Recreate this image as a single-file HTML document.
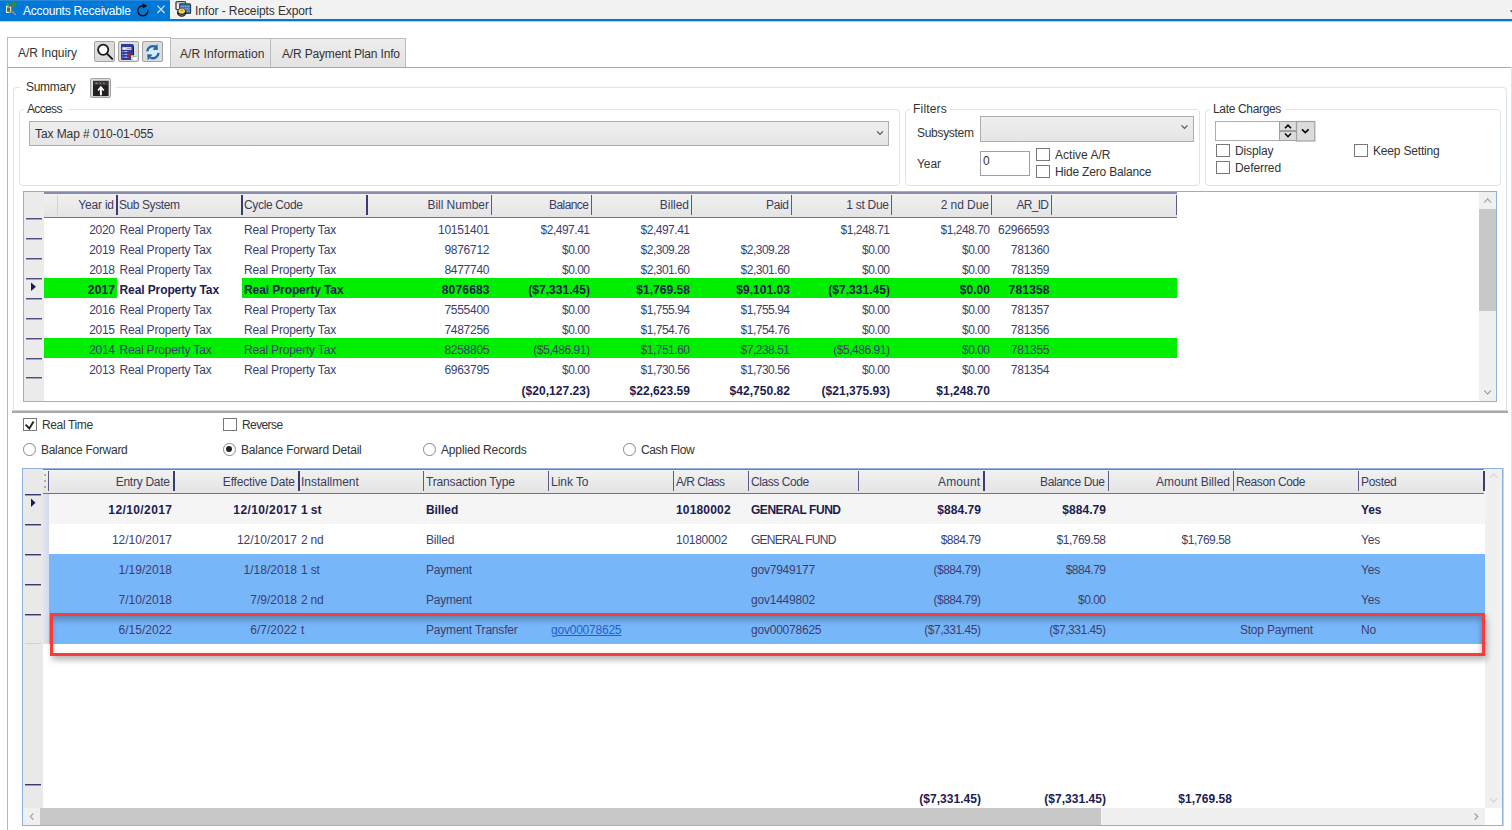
<!DOCTYPE html>
<html><head><meta charset="utf-8">
<style>
*{box-sizing:border-box;margin:0;padding:0}
html,body{width:1512px;height:830px;overflow:hidden;background:#fff}
body{position:relative;font-family:"Liberation Sans",sans-serif;font-size:11.5px;color:#333}
.a{position:absolute}
.t{position:absolute;white-space:nowrap;line-height:14px}
svg{position:absolute;overflow:visible}
.gb{position:absolute;border:1px solid #dce4eb;border-radius:4px}
.cb{position:absolute;width:14px;height:13px;border:1px solid #787878;background:#fff}
.rd{position:absolute;width:12.5px;height:12.5px;border:1px solid #8a8a8a;border-radius:50%;background:#fff}
.btn{position:absolute;border:1px solid #a3a3a3;border-radius:2px;background:#dcdcdc}
</style></head>
<body>

<div class="a" style="left:0px;top:0px;width:1512px;height:19px;background:#f2f2f2"></div>
<div class="a" style="left:0px;top:21px;width:1512px;height:1px;background:#b4d3f1"></div>
<div class="a" style="left:0px;top:19px;width:1512px;height:2px;background:#0078d7"></div>
<div class="a" style="left:0px;top:0px;width:170px;height:21px;background:#0078d7"></div>
<div class="a" style="left:0px;top:0px;width:170px;height:1px;background:#2a8ade"></div>
<div class="t" style="top:3.84px;font-size:12.0px;letter-spacing:-0.235px;color:#fff;left:23px;">Accounts Receivable</div>
<div class="t" style="top:3.84px;font-size:12.0px;letter-spacing:-0.104px;color:#333;left:195px;">Infor - Receipts Export</div>
<div class="a" style="left:7px;top:37px;width:164px;height:31px;border:1px solid #bcbcc0;border-bottom:none;background:#fff"></div>
<div class="a" style="left:170px;top:38px;width:101px;height:30px;border:1px solid #bcbcbc;border-bottom:none;background:linear-gradient(#ededed,#e3e3e3)"></div>
<div class="a" style="left:270px;top:38px;width:136px;height:30px;border:1px solid #bcbcbc;border-bottom:none;background:linear-gradient(#ededed,#e3e3e3)"></div>
<div class="t" style="top:45.84px;font-size:12.0px;letter-spacing:-0.032px;left:18px;">A/R Inquiry</div>
<div class="t" style="top:46.84px;font-size:12.0px;letter-spacing:0.069px;left:180px;">A/R Information</div>
<div class="t" style="top:46.84px;font-size:12.0px;letter-spacing:-0.171px;left:282px;">A/R Payment Plan Info</div>
<div class="btn" style="left:94px;top:41px;width:21px;height:21px"></div>
<div class="btn" style="left:118px;top:41px;width:21px;height:21px"></div>
<div class="btn" style="left:142px;top:41px;width:21px;height:21px"></div>
<div class="a" style="left:7px;top:67px;width:1505px;height:1px;background:#a8a8ac"></div>
<div class="a" style="left:7px;top:67px;width:1px;height:763px;background:#b4b6bc"></div>
<div class="a" style="left:1511px;top:67px;width:1px;height:763px;background:#e2e2e2"></div>
<div class="gb" style="left:13px;top:87px;width:1494px;height:323px;border-bottom:none;border-radius:4px 4px 0 0"></div>
<div class="a" style="left:20px;top:80px;width:96px;height:16px;background:#fff"></div>
<div class="t" style="top:79.84px;font-size:12.0px;letter-spacing:-0.277px;left:26px;">Summary</div>
<div class="btn" style="left:90px;top:78px;width:21px;height:20px"></div>
<div class="gb" style="left:19px;top:109px;width:881px;height:77px"></div>
<div class="a" style="left:24px;top:102px;width:44px;height:14px;background:#fff"></div>
<div class="t" style="top:102.34px;font-size:12.0px;letter-spacing:-0.646px;left:27px;">Access</div>
<div class="a" style="left:29px;top:121px;width:860px;height:25px;border:1px solid #adadad;background:linear-gradient(#efefef,#e5e5e5)"></div>
<div class="t" style="top:126.84px;font-size:12.0px;letter-spacing:-0.084px;left:35px;">Tax Map # 010-01-055</div>
<div class="gb" style="left:905px;top:109px;width:295px;height:77px"></div>
<div class="a" style="left:910px;top:102px;width:40px;height:14px;background:#fff"></div>
<div class="t" style="top:102.34px;font-size:12.0px;letter-spacing:0.190px;left:913px;">Filters</div>
<div class="t" style="top:125.84px;font-size:12.0px;letter-spacing:-0.306px;left:917px;">Subsystem</div>
<div class="a" style="left:980px;top:116px;width:214px;height:26px;border:1px solid #adadad;background:linear-gradient(#efefef,#e5e5e5)"></div>
<div class="t" style="top:156.84px;font-size:12.0px;letter-spacing:-0.062px;left:917px;">Year</div>
<div class="a" style="left:980px;top:151px;width:50px;height:25px;border:1px solid #a0a0a0;background:#fff"></div>
<div class="t" style="top:153.84px;font-size:12px;left:983px;">0</div>
<div class="cb" style="left:1036px;top:148px"></div>
<div class="t" style="top:148.04px;font-size:12.0px;letter-spacing:0.015px;left:1055px;">Active A/R</div>
<div class="cb" style="left:1036px;top:165px"></div>
<div class="t" style="top:165.04px;font-size:12.0px;letter-spacing:-0.188px;left:1055px;">Hide Zero Balance</div>
<div class="gb" style="left:1205px;top:109px;width:296px;height:77px"></div>
<div class="a" style="left:1210px;top:102px;width:76px;height:14px;background:#fff"></div>
<div class="t" style="top:102.34px;font-size:12.0px;letter-spacing:-0.337px;left:1213px;">Late Charges</div>
<div class="a" style="left:1215px;top:121px;width:82px;height:20px;border:1px solid #adadad;background:#fff"></div>
<div class="cb" style="left:1216px;top:144px"></div>
<div class="t" style="top:144.04px;font-size:12.0px;letter-spacing:-0.121px;left:1235px;">Display</div>
<div class="cb" style="left:1216px;top:161px"></div>
<div class="t" style="top:161.04px;font-size:12.0px;letter-spacing:-0.086px;left:1235px;">Deferred</div>
<div class="cb" style="left:1354px;top:144px"></div>
<div class="t" style="top:144.04px;font-size:12.0px;letter-spacing:-0.177px;left:1373px;">Keep Setting</div>
<div class="a" style="left:23px;top:191px;width:1474px;height:211px;border:1px solid #8fb1db;background:#fff"></div>
<div class="a" style="left:24px;top:192px;width:20px;height:209px;background:#ececec"></div>
<div class="a" style="left:44px;top:192px;width:1133px;height:26px;background:linear-gradient(#f1f1f1,#e4e4e4);border-top:2px solid #8a8cab;border-bottom:1px solid #6f6f92"></div>
<div class="a" style="left:57px;top:195px;width:1px;height:20px;background:#d0d0d8"></div>
<div class="a" style="left:116px;top:195px;width:2px;height:20px;background:#3a3b70"></div>
<div class="a" style="left:241px;top:195px;width:2px;height:20px;background:#3a3b70"></div>
<div class="a" style="left:366px;top:195px;width:2px;height:20px;background:#3a3b70"></div>
<div class="a" style="left:491px;top:195px;width:1px;height:20px;background:#5b5b88"></div>
<div class="a" style="left:591px;top:195px;width:1px;height:20px;background:#5b5b88"></div>
<div class="a" style="left:691px;top:195px;width:1px;height:20px;background:#5b5b88"></div>
<div class="a" style="left:791px;top:195px;width:1px;height:20px;background:#5b5b88"></div>
<div class="a" style="left:891px;top:195px;width:1px;height:20px;background:#5b5b88"></div>
<div class="a" style="left:991px;top:195px;width:1px;height:20px;background:#5b5b88"></div>
<div class="a" style="left:1051px;top:195px;width:1px;height:20px;background:#5b5b88"></div>
<div class="a" style="left:1176px;top:195px;width:1px;height:20px;background:#5b5b88"></div>
<div class="t" style="top:197.84px;font-size:12.0px;letter-spacing:-0.203px;color:#3c3c5c;left:-186.20px;width:300px;text-align:right;">Year id</div>
<div class="t" style="top:197.84px;font-size:12.0px;letter-spacing:-0.419px;color:#3c3c5c;left:119px;">Sub System</div>
<div class="t" style="top:197.84px;font-size:12.0px;letter-spacing:-0.343px;color:#3c3c5c;left:244px;">Cycle Code</div>
<div class="t" style="top:197.84px;font-size:12.0px;letter-spacing:-0.047px;color:#3c3c5c;left:188.95px;width:300px;text-align:right;">Bill Number</div>
<div class="t" style="top:197.84px;font-size:12.0px;letter-spacing:-0.567px;color:#3c3c5c;left:288.43px;width:300px;text-align:right;">Balance</div>
<div class="t" style="top:197.84px;font-size:12.0px;letter-spacing:-0.042px;color:#3c3c5c;left:388.96px;width:300px;text-align:right;">Billed</div>
<div class="t" style="top:197.84px;font-size:12.0px;letter-spacing:-0.355px;color:#3c3c5c;left:488.65px;width:300px;text-align:right;">Paid</div>
<div class="t" style="top:197.84px;font-size:12.0px;letter-spacing:-0.286px;color:#3c3c5c;left:588.71px;width:300px;text-align:right;">1 st Due</div>
<div class="t" style="top:197.84px;font-size:12.0px;letter-spacing:-0.063px;color:#3c3c5c;left:688.94px;width:300px;text-align:right;">2 nd Due</div>
<div class="t" style="top:197.84px;font-size:12.0px;letter-spacing:-0.729px;color:#3c3c5c;left:748.27px;width:300px;text-align:right;">AR_ID</div>
<div class="t" style="top:222.84px;font-size:12.0px;letter-spacing:-0.278px;color:#3c3e6e;left:-185.28px;width:300px;text-align:right;">2020</div>
<div class="t" style="top:222.84px;font-size:12.0px;letter-spacing:-0.187px;color:#3c3e6e;left:119.5px;">Real Property Tax</div>
<div class="t" style="top:222.84px;font-size:12.0px;letter-spacing:-0.187px;color:#3c3e6e;left:244px;">Real Property Tax</div>
<div class="t" style="top:222.84px;font-size:12.0px;letter-spacing:-0.278px;color:#3c3e6e;left:189.22px;width:300px;text-align:right;">10151401</div>
<div class="t" style="top:222.84px;font-size:12.0px;letter-spacing:-0.494px;color:#3c3e6e;left:289.51px;width:300px;text-align:right;">$2,497.41</div>
<div class="t" style="top:222.84px;font-size:12.0px;letter-spacing:-0.494px;color:#3c3e6e;left:389.51px;width:300px;text-align:right;">$2,497.41</div>
<div class="t" style="top:222.84px;font-size:12.0px;letter-spacing:-0.494px;color:#3c3e6e;left:589.51px;width:300px;text-align:right;">$1,248.71</div>
<div class="t" style="top:222.84px;font-size:12.0px;letter-spacing:-0.494px;color:#3c3e6e;left:689.51px;width:300px;text-align:right;">$1,248.70</div>
<div class="t" style="top:222.84px;font-size:12.0px;letter-spacing:-0.278px;color:#3c3e6e;left:749.22px;width:300px;text-align:right;">62966593</div>
<div class="t" style="top:242.84px;font-size:12.0px;letter-spacing:-0.278px;color:#3c3e6e;left:-185.28px;width:300px;text-align:right;">2019</div>
<div class="t" style="top:242.84px;font-size:12.0px;letter-spacing:-0.187px;color:#3c3e6e;left:119.5px;">Real Property Tax</div>
<div class="t" style="top:242.84px;font-size:12.0px;letter-spacing:-0.187px;color:#3c3e6e;left:244px;">Real Property Tax</div>
<div class="t" style="top:242.84px;font-size:12.0px;letter-spacing:-0.278px;color:#3c3e6e;left:189.22px;width:300px;text-align:right;">9876712</div>
<div class="t" style="top:242.84px;font-size:12.0px;letter-spacing:-0.501px;color:#3c3e6e;left:289.50px;width:300px;text-align:right;">$0.00</div>
<div class="t" style="top:242.84px;font-size:12.0px;letter-spacing:-0.494px;color:#3c3e6e;left:389.51px;width:300px;text-align:right;">$2,309.28</div>
<div class="t" style="top:242.84px;font-size:12.0px;letter-spacing:-0.494px;color:#3c3e6e;left:489.51px;width:300px;text-align:right;">$2,309.28</div>
<div class="t" style="top:242.84px;font-size:12.0px;letter-spacing:-0.501px;color:#3c3e6e;left:589.50px;width:300px;text-align:right;">$0.00</div>
<div class="t" style="top:242.84px;font-size:12.0px;letter-spacing:-0.501px;color:#3c3e6e;left:689.50px;width:300px;text-align:right;">$0.00</div>
<div class="t" style="top:242.84px;font-size:12.0px;letter-spacing:-0.278px;color:#3c3e6e;left:749.22px;width:300px;text-align:right;">781360</div>
<div class="t" style="top:262.84px;font-size:12.0px;letter-spacing:-0.278px;color:#3c3e6e;left:-185.28px;width:300px;text-align:right;">2018</div>
<div class="t" style="top:262.84px;font-size:12.0px;letter-spacing:-0.187px;color:#3c3e6e;left:119.5px;">Real Property Tax</div>
<div class="t" style="top:262.84px;font-size:12.0px;letter-spacing:-0.187px;color:#3c3e6e;left:244px;">Real Property Tax</div>
<div class="t" style="top:262.84px;font-size:12.0px;letter-spacing:-0.278px;color:#3c3e6e;left:189.22px;width:300px;text-align:right;">8477740</div>
<div class="t" style="top:262.84px;font-size:12.0px;letter-spacing:-0.501px;color:#3c3e6e;left:289.50px;width:300px;text-align:right;">$0.00</div>
<div class="t" style="top:262.84px;font-size:12.0px;letter-spacing:-0.494px;color:#3c3e6e;left:389.51px;width:300px;text-align:right;">$2,301.60</div>
<div class="t" style="top:262.84px;font-size:12.0px;letter-spacing:-0.494px;color:#3c3e6e;left:489.51px;width:300px;text-align:right;">$2,301.60</div>
<div class="t" style="top:262.84px;font-size:12.0px;letter-spacing:-0.501px;color:#3c3e6e;left:589.50px;width:300px;text-align:right;">$0.00</div>
<div class="t" style="top:262.84px;font-size:12.0px;letter-spacing:-0.501px;color:#3c3e6e;left:689.50px;width:300px;text-align:right;">$0.00</div>
<div class="t" style="top:262.84px;font-size:12.0px;letter-spacing:-0.278px;color:#3c3e6e;left:749.22px;width:300px;text-align:right;">781359</div>
<div class="a" style="left:44px;top:278px;width:73px;height:20px;background:#00ee00"></div>
<div class="a" style="left:242px;top:278px;width:935px;height:20px;background:#00ee00"></div>
<div class="t" style="top:282.84px;font-size:12.0px;letter-spacing:0.167px;font-weight:bold;color:#1c1c50;left:-184.83px;width:300px;text-align:right;">2017</div>
<div class="t" style="top:282.84px;font-size:12.0px;letter-spacing:-0.099px;font-weight:bold;color:#1c1c50;left:119.5px;">Real Property Tax</div>
<div class="t" style="top:282.84px;font-size:12.0px;letter-spacing:-0.099px;font-weight:bold;color:#1c1c50;left:244px;">Real Property Tax</div>
<div class="t" style="top:282.84px;font-size:12.0px;letter-spacing:0.167px;font-weight:bold;color:#1c1c50;left:189.67px;width:300px;text-align:right;">8076683</div>
<div class="t" style="top:282.84px;font-size:12.0px;letter-spacing:0.046px;font-weight:bold;color:#1c1c50;left:290.05px;width:300px;text-align:right;">($7,331.45)</div>
<div class="t" style="top:282.84px;font-size:12.0px;letter-spacing:0.049px;font-weight:bold;color:#1c1c50;left:390.05px;width:300px;text-align:right;">$1,769.58</div>
<div class="t" style="top:282.84px;font-size:12.0px;letter-spacing:0.049px;font-weight:bold;color:#1c1c50;left:490.05px;width:300px;text-align:right;">$9,101.03</div>
<div class="t" style="top:282.84px;font-size:12.0px;letter-spacing:0.046px;font-weight:bold;color:#1c1c50;left:590.05px;width:300px;text-align:right;">($7,331.45)</div>
<div class="t" style="top:282.84px;font-size:12.0px;letter-spacing:0.050px;font-weight:bold;color:#1c1c50;left:690.05px;width:300px;text-align:right;">$0.00</div>
<div class="t" style="top:282.84px;font-size:12.0px;letter-spacing:0.167px;font-weight:bold;color:#1c1c50;left:749.67px;width:300px;text-align:right;">781358</div>
<div class="t" style="top:302.84px;font-size:12.0px;letter-spacing:-0.278px;color:#3c3e6e;left:-185.28px;width:300px;text-align:right;">2016</div>
<div class="t" style="top:302.84px;font-size:12.0px;letter-spacing:-0.187px;color:#3c3e6e;left:119.5px;">Real Property Tax</div>
<div class="t" style="top:302.84px;font-size:12.0px;letter-spacing:-0.187px;color:#3c3e6e;left:244px;">Real Property Tax</div>
<div class="t" style="top:302.84px;font-size:12.0px;letter-spacing:-0.278px;color:#3c3e6e;left:189.22px;width:300px;text-align:right;">7555400</div>
<div class="t" style="top:302.84px;font-size:12.0px;letter-spacing:-0.501px;color:#3c3e6e;left:289.50px;width:300px;text-align:right;">$0.00</div>
<div class="t" style="top:302.84px;font-size:12.0px;letter-spacing:-0.494px;color:#3c3e6e;left:389.51px;width:300px;text-align:right;">$1,755.94</div>
<div class="t" style="top:302.84px;font-size:12.0px;letter-spacing:-0.494px;color:#3c3e6e;left:489.51px;width:300px;text-align:right;">$1,755.94</div>
<div class="t" style="top:302.84px;font-size:12.0px;letter-spacing:-0.501px;color:#3c3e6e;left:589.50px;width:300px;text-align:right;">$0.00</div>
<div class="t" style="top:302.84px;font-size:12.0px;letter-spacing:-0.501px;color:#3c3e6e;left:689.50px;width:300px;text-align:right;">$0.00</div>
<div class="t" style="top:302.84px;font-size:12.0px;letter-spacing:-0.278px;color:#3c3e6e;left:749.22px;width:300px;text-align:right;">781357</div>
<div class="t" style="top:322.84px;font-size:12.0px;letter-spacing:-0.278px;color:#3c3e6e;left:-185.28px;width:300px;text-align:right;">2015</div>
<div class="t" style="top:322.84px;font-size:12.0px;letter-spacing:-0.187px;color:#3c3e6e;left:119.5px;">Real Property Tax</div>
<div class="t" style="top:322.84px;font-size:12.0px;letter-spacing:-0.187px;color:#3c3e6e;left:244px;">Real Property Tax</div>
<div class="t" style="top:322.84px;font-size:12.0px;letter-spacing:-0.278px;color:#3c3e6e;left:189.22px;width:300px;text-align:right;">7487256</div>
<div class="t" style="top:322.84px;font-size:12.0px;letter-spacing:-0.501px;color:#3c3e6e;left:289.50px;width:300px;text-align:right;">$0.00</div>
<div class="t" style="top:322.84px;font-size:12.0px;letter-spacing:-0.494px;color:#3c3e6e;left:389.51px;width:300px;text-align:right;">$1,754.76</div>
<div class="t" style="top:322.84px;font-size:12.0px;letter-spacing:-0.494px;color:#3c3e6e;left:489.51px;width:300px;text-align:right;">$1,754.76</div>
<div class="t" style="top:322.84px;font-size:12.0px;letter-spacing:-0.501px;color:#3c3e6e;left:589.50px;width:300px;text-align:right;">$0.00</div>
<div class="t" style="top:322.84px;font-size:12.0px;letter-spacing:-0.501px;color:#3c3e6e;left:689.50px;width:300px;text-align:right;">$0.00</div>
<div class="t" style="top:322.84px;font-size:12.0px;letter-spacing:-0.278px;color:#3c3e6e;left:749.22px;width:300px;text-align:right;">781356</div>
<div class="a" style="left:44px;top:338px;width:1133px;height:20px;background:#00ee00"></div>
<div class="t" style="top:342.84px;font-size:12.0px;letter-spacing:-0.278px;color:#3c3e6e;left:-185.28px;width:300px;text-align:right;">2014</div>
<div class="t" style="top:342.84px;font-size:12.0px;letter-spacing:-0.187px;color:#3c3e6e;left:119.5px;">Real Property Tax</div>
<div class="t" style="top:342.84px;font-size:12.0px;letter-spacing:-0.187px;color:#3c3e6e;left:244px;">Real Property Tax</div>
<div class="t" style="top:342.84px;font-size:12.0px;letter-spacing:-0.278px;color:#3c3e6e;left:189.22px;width:300px;text-align:right;">8258805</div>
<div class="t" style="top:342.84px;font-size:12.0px;letter-spacing:-0.465px;color:#3c3e6e;left:289.54px;width:300px;text-align:right;">($5,486.91)</div>
<div class="t" style="top:342.84px;font-size:12.0px;letter-spacing:-0.494px;color:#3c3e6e;left:389.51px;width:300px;text-align:right;">$1,751.60</div>
<div class="t" style="top:342.84px;font-size:12.0px;letter-spacing:-0.494px;color:#3c3e6e;left:489.51px;width:300px;text-align:right;">$7,238.51</div>
<div class="t" style="top:342.84px;font-size:12.0px;letter-spacing:-0.465px;color:#3c3e6e;left:589.54px;width:300px;text-align:right;">($5,486.91)</div>
<div class="t" style="top:342.84px;font-size:12.0px;letter-spacing:-0.501px;color:#3c3e6e;left:689.50px;width:300px;text-align:right;">$0.00</div>
<div class="t" style="top:342.84px;font-size:12.0px;letter-spacing:-0.278px;color:#3c3e6e;left:749.22px;width:300px;text-align:right;">781355</div>
<div class="t" style="top:362.84px;font-size:12.0px;letter-spacing:-0.278px;color:#3c3e6e;left:-185.28px;width:300px;text-align:right;">2013</div>
<div class="t" style="top:362.84px;font-size:12.0px;letter-spacing:-0.187px;color:#3c3e6e;left:119.5px;">Real Property Tax</div>
<div class="t" style="top:362.84px;font-size:12.0px;letter-spacing:-0.187px;color:#3c3e6e;left:244px;">Real Property Tax</div>
<div class="t" style="top:362.84px;font-size:12.0px;letter-spacing:-0.278px;color:#3c3e6e;left:189.22px;width:300px;text-align:right;">6963795</div>
<div class="t" style="top:362.84px;font-size:12.0px;letter-spacing:-0.501px;color:#3c3e6e;left:289.50px;width:300px;text-align:right;">$0.00</div>
<div class="t" style="top:362.84px;font-size:12.0px;letter-spacing:-0.494px;color:#3c3e6e;left:389.51px;width:300px;text-align:right;">$1,730.56</div>
<div class="t" style="top:362.84px;font-size:12.0px;letter-spacing:-0.494px;color:#3c3e6e;left:489.51px;width:300px;text-align:right;">$1,730.56</div>
<div class="t" style="top:362.84px;font-size:12.0px;letter-spacing:-0.501px;color:#3c3e6e;left:589.50px;width:300px;text-align:right;">$0.00</div>
<div class="t" style="top:362.84px;font-size:12.0px;letter-spacing:-0.501px;color:#3c3e6e;left:689.50px;width:300px;text-align:right;">$0.00</div>
<div class="t" style="top:362.84px;font-size:12.0px;letter-spacing:-0.278px;color:#3c3e6e;left:749.22px;width:300px;text-align:right;">781354</div>
<div class="a" style="left:26px;top:218px;width:16px;height:2px;background:linear-gradient(#4e4e80 50%,#a4a4c0 50%)"></div>
<div class="a" style="left:26px;top:238px;width:16px;height:2px;background:linear-gradient(#4e4e80 50%,#a4a4c0 50%)"></div>
<div class="a" style="left:26px;top:258px;width:16px;height:2px;background:linear-gradient(#4e4e80 50%,#a4a4c0 50%)"></div>
<div class="a" style="left:26px;top:278px;width:16px;height:2px;background:linear-gradient(#4e4e80 50%,#a4a4c0 50%)"></div>
<div class="a" style="left:26px;top:298px;width:16px;height:2px;background:linear-gradient(#4e4e80 50%,#a4a4c0 50%)"></div>
<div class="a" style="left:26px;top:318px;width:16px;height:2px;background:linear-gradient(#4e4e80 50%,#a4a4c0 50%)"></div>
<div class="a" style="left:26px;top:338px;width:16px;height:2px;background:linear-gradient(#4e4e80 50%,#a4a4c0 50%)"></div>
<div class="a" style="left:26px;top:358px;width:16px;height:2px;background:linear-gradient(#4e4e80 50%,#a4a4c0 50%)"></div>
<div class="a" style="left:26px;top:377px;width:16px;height:2px;background:linear-gradient(#4e4e80 50%,#a4a4c0 50%)"></div>
<div class="t" style="top:384.14px;font-size:12.0px;letter-spacing:0.047px;font-weight:bold;color:#1c1c50;left:290.05px;width:300px;text-align:right;">($20,127.23)</div>
<div class="t" style="top:384.14px;font-size:12.0px;letter-spacing:0.050px;font-weight:bold;color:#1c1c50;left:390.05px;width:300px;text-align:right;">$22,623.59</div>
<div class="t" style="top:384.14px;font-size:12.0px;letter-spacing:0.050px;font-weight:bold;color:#1c1c50;left:490.05px;width:300px;text-align:right;">$42,750.82</div>
<div class="t" style="top:384.14px;font-size:12.0px;letter-spacing:0.047px;font-weight:bold;color:#1c1c50;left:590.05px;width:300px;text-align:right;">($21,375.93)</div>
<div class="t" style="top:384.14px;font-size:12.0px;letter-spacing:0.049px;font-weight:bold;color:#1c1c50;left:690.05px;width:300px;text-align:right;">$1,248.70</div>
<svg style="left:0;top:0" width="1" height="1"><path d="M31 282.5 L36 286.8 L31 291 Z" fill="#1a1a55"/></svg>
<div class="a" style="left:1479px;top:192px;width:17px;height:209px;background:#f0f0f0"></div>
<div class="a" style="left:1479px;top:209px;width:17px;height:102px;background:#c8c8c8"></div>
<div class="a" style="left:12px;top:410px;width:1496px;height:3px;background:linear-gradient(#cfcfcf 33%,#a8a8a8 33%)"></div>
<div class="cb" style="left:23px;top:418px"></div>
<div class="t" style="top:418.34px;font-size:12.0px;letter-spacing:-0.358px;left:42px;">Real Time</div>
<div class="cb" style="left:223px;top:418px"></div>
<div class="t" style="top:418.34px;font-size:12.0px;letter-spacing:-0.598px;left:242px;">Reverse</div>
<div class="rd" style="left:23px;top:443px"></div>
<div class="t" style="top:442.84px;font-size:12.0px;letter-spacing:-0.281px;left:41px;">Balance Forward</div>
<div class="rd" style="left:223px;top:443px"></div>
<div class="t" style="top:442.84px;font-size:12.0px;letter-spacing:-0.188px;left:241px;">Balance Forward Detail</div>
<div class="rd" style="left:423px;top:443px"></div>
<div class="t" style="top:442.84px;font-size:12.0px;letter-spacing:-0.157px;left:441px;">Applied Records</div>
<div class="rd" style="left:623px;top:443px"></div>
<div class="t" style="top:442.84px;font-size:12.0px;letter-spacing:-0.387px;left:641px;">Cash Flow</div>
<div class="a" style="left:22px;top:468px;width:1481px;height:358px;border:1px solid #8fb1db;background:#fff"></div>
<div class="a" style="left:1503px;top:468px;width:1px;height:358px;background:#c4d7ee"></div>
<div class="a" style="left:23px;top:469px;width:20px;height:339px;background:#e9e9e9"></div>
<div class="a" style="left:43px;top:469px;width:1441px;height:25px;background:linear-gradient(#f1f1f1,#e4e4e4);border-top:1px solid #7d7d9e;border-bottom:1px solid #6f6f92"></div>
<div class="a" style="left:48px;top:471px;width:1px;height:20px;background:#5b5b88"></div>
<div class="a" style="left:173px;top:471px;width:2px;height:20px;background:#3a3b70"></div>
<div class="a" style="left:298px;top:471px;width:2px;height:20px;background:#3a3b70"></div>
<div class="a" style="left:423px;top:471px;width:1px;height:20px;background:#5b5b88"></div>
<div class="a" style="left:548px;top:471px;width:1px;height:20px;background:#5b5b88"></div>
<div class="a" style="left:673px;top:471px;width:1px;height:20px;background:#5b5b88"></div>
<div class="a" style="left:748px;top:471px;width:1px;height:20px;background:#5b5b88"></div>
<div class="a" style="left:858px;top:471px;width:1px;height:20px;background:#5b5b88"></div>
<div class="a" style="left:983px;top:471px;width:2px;height:20px;background:#3a3b70"></div>
<div class="a" style="left:1108px;top:471px;width:1px;height:20px;background:#5b5b88"></div>
<div class="a" style="left:1233px;top:471px;width:1px;height:20px;background:#5b5b88"></div>
<div class="a" style="left:1358px;top:471px;width:1px;height:20px;background:#5b5b88"></div>
<div class="a" style="left:1483px;top:471px;width:2px;height:20px;background:#3a3b70"></div>
<div class="t" style="top:474.84px;font-size:12.0px;letter-spacing:-0.269px;color:#3c3c5c;left:-130.27px;width:300px;text-align:right;">Entry Date</div>
<div class="t" style="top:474.84px;font-size:12.0px;letter-spacing:-0.178px;color:#3c3c5c;left:-5.18px;width:300px;text-align:right;">Effective Date</div>
<div class="t" style="top:474.84px;font-size:12.0px;letter-spacing:-0.021px;color:#3c3c5c;left:301px;">Installment</div>
<div class="t" style="top:474.84px;font-size:12.0px;letter-spacing:-0.168px;color:#3c3c5c;left:426px;">Transaction Type</div>
<div class="t" style="top:474.84px;font-size:12.0px;letter-spacing:-0.044px;color:#3c3c5c;left:551px;">Link To</div>
<div class="t" style="top:474.84px;font-size:12.0px;letter-spacing:-0.538px;color:#3c3c5c;left:676px;">A/R Class</div>
<div class="t" style="top:474.84px;font-size:12.0px;letter-spacing:-0.423px;color:#3c3c5c;left:751px;">Class Code</div>
<div class="t" style="top:474.84px;font-size:12.0px;letter-spacing:0.107px;color:#3c3c5c;left:680.11px;width:300px;text-align:right;">Amount</div>
<div class="t" style="top:474.84px;font-size:12.0px;letter-spacing:-0.374px;color:#3c3c5c;left:804.63px;width:300px;text-align:right;">Balance Due</div>
<div class="t" style="top:474.84px;font-size:12.0px;color:#3c3c5c;left:930.00px;width:300px;text-align:right;">Amount Billed</div>
<div class="t" style="top:474.84px;font-size:12.0px;letter-spacing:-0.399px;color:#3c3c5c;left:1236px;">Reason Code</div>
<div class="t" style="top:474.84px;font-size:12.0px;letter-spacing:-0.343px;color:#3c3c5c;left:1361px;">Posted</div>
<div class="a" style="left:43px;top:494px;width:6px;height:150px;background:linear-gradient(90deg,#dce6f2,#d4dcea)"></div>
<div class="a" style="left:25px;top:643px;width:16px;height:1px;background:#d2d2d2"></div>
<div class="a" style="left:49px;top:494px;width:1436px;height:30px;background:#f5f5f5"></div>
<div class="a" style="left:49px;top:554px;width:1436px;height:90px;background:#78b6fa"></div>
<div class="t" style="top:503.34px;font-size:12.0px;letter-spacing:0.400px;font-weight:bold;color:#1c1c50;left:-127.60px;width:300px;text-align:right;">12/10/2017</div>
<div class="t" style="top:503.34px;font-size:12.0px;letter-spacing:0.400px;font-weight:bold;color:#1c1c50;left:-2.60px;width:300px;text-align:right;">12/10/2017</div>
<div class="t" style="top:503.34px;font-size:12.0px;letter-spacing:-0.086px;font-weight:bold;color:#1c1c50;left:301px;">1 st</div>
<div class="t" style="top:503.34px;font-size:12.0px;letter-spacing:-0.091px;font-weight:bold;color:#1c1c50;left:426px;">Billed</div>
<div class="t" style="top:503.34px;font-size:12.0px;letter-spacing:0.167px;font-weight:bold;color:#1c1c50;left:676px;">10180002</div>
<div class="t" style="top:503.34px;font-size:12.0px;letter-spacing:-0.462px;font-weight:bold;color:#1c1c50;left:751px;">GENERAL FUND</div>
<div class="t" style="top:503.34px;font-size:12.0px;letter-spacing:0.052px;font-weight:bold;color:#1c1c50;left:681.05px;width:300px;text-align:right;">$884.79</div>
<div class="t" style="top:503.34px;font-size:12.0px;letter-spacing:0.052px;font-weight:bold;color:#1c1c50;left:806.05px;width:300px;text-align:right;">$884.79</div>
<div class="t" style="top:503.34px;font-size:12.0px;letter-spacing:-0.115px;font-weight:bold;color:#1c1c50;left:1361px;">Yes</div>
<div class="t" style="top:533.34px;font-size:12.0px;color:#3c3e6e;left:-128.00px;width:300px;text-align:right;">12/10/2017</div>
<div class="t" style="top:533.34px;font-size:12.0px;color:#3c3e6e;left:-3.00px;width:300px;text-align:right;">12/10/2017</div>
<div class="t" style="top:533.34px;font-size:12.0px;letter-spacing:-0.195px;color:#3c3e6e;left:301px;">2 nd</div>
<div class="t" style="top:533.34px;font-size:12.0px;letter-spacing:-0.163px;color:#3c3e6e;left:426px;">Billed</div>
<div class="t" style="top:533.34px;font-size:12.0px;letter-spacing:-0.278px;color:#3c3e6e;left:676px;">10180002</div>
<div class="t" style="top:533.34px;font-size:12.0px;letter-spacing:-0.747px;color:#3c3e6e;left:751px;">GENERAL FUND</div>
<div class="t" style="top:533.34px;font-size:12.0px;letter-spacing:-0.516px;color:#3c3e6e;left:680.48px;width:300px;text-align:right;">$884.79</div>
<div class="t" style="top:533.34px;font-size:12.0px;letter-spacing:-0.494px;color:#3c3e6e;left:805.51px;width:300px;text-align:right;">$1,769.58</div>
<div class="t" style="top:533.34px;font-size:12.0px;letter-spacing:-0.494px;color:#3c3e6e;left:930.51px;width:300px;text-align:right;">$1,769.58</div>
<div class="t" style="top:533.34px;font-size:12.0px;letter-spacing:-0.218px;color:#3c3e6e;left:1361px;">Yes</div>
<div class="t" style="top:563.34px;font-size:12.0px;color:#3c3e6e;left:-128.00px;width:300px;text-align:right;">1/19/2018</div>
<div class="t" style="top:563.34px;font-size:12.0px;color:#3c3e6e;left:-3.00px;width:300px;text-align:right;">1/18/2018</div>
<div class="t" style="top:563.34px;font-size:12.0px;letter-spacing:-0.161px;color:#3c3e6e;left:301px;">1 st</div>
<div class="t" style="top:563.34px;font-size:12.0px;letter-spacing:-0.226px;color:#3c3e6e;left:426px;">Payment</div>
<div class="t" style="top:563.34px;font-size:12.0px;letter-spacing:-0.220px;color:#3c3e6e;left:751px;">gov7949177</div>
<div class="t" style="top:563.34px;font-size:12.0px;letter-spacing:-0.476px;color:#3c3e6e;left:680.52px;width:300px;text-align:right;">($884.79)</div>
<div class="t" style="top:563.34px;font-size:12.0px;letter-spacing:-0.516px;color:#3c3e6e;left:805.48px;width:300px;text-align:right;">$884.79</div>
<div class="t" style="top:563.34px;font-size:12.0px;letter-spacing:-0.218px;color:#3c3e6e;left:1361px;">Yes</div>
<div class="t" style="top:593.34px;font-size:12.0px;color:#3c3e6e;left:-128.00px;width:300px;text-align:right;">7/10/2018</div>
<div class="t" style="top:593.34px;font-size:12.0px;color:#3c3e6e;left:-3.00px;width:300px;text-align:right;">7/9/2018</div>
<div class="t" style="top:593.34px;font-size:12.0px;letter-spacing:-0.195px;color:#3c3e6e;left:301px;">2 nd</div>
<div class="t" style="top:593.34px;font-size:12.0px;letter-spacing:-0.226px;color:#3c3e6e;left:426px;">Payment</div>
<div class="t" style="top:593.34px;font-size:12.0px;letter-spacing:-0.220px;color:#3c3e6e;left:751px;">gov1449802</div>
<div class="t" style="top:593.34px;font-size:12.0px;letter-spacing:-0.476px;color:#3c3e6e;left:680.52px;width:300px;text-align:right;">($884.79)</div>
<div class="t" style="top:593.34px;font-size:12.0px;letter-spacing:-0.501px;color:#3c3e6e;left:805.50px;width:300px;text-align:right;">$0.00</div>
<div class="t" style="top:593.34px;font-size:12.0px;letter-spacing:-0.218px;color:#3c3e6e;left:1361px;">Yes</div>
<div class="t" style="top:623.34px;font-size:12.0px;color:#3c3e6e;left:-128.00px;width:300px;text-align:right;">6/15/2022</div>
<div class="t" style="top:623.34px;font-size:12.0px;color:#3c3e6e;left:-3.00px;width:300px;text-align:right;">6/7/2022</div>
<div class="t" style="top:623.34px;font-size:12.0px;letter-spacing:-0.111px;color:#3c3e6e;left:301px;">t</div>
<div class="t" style="top:623.34px;font-size:12.0px;letter-spacing:-0.197px;color:#3c3e6e;left:426px;">Payment Transfer</div>
<div class="t" style="top:623.34px;font-size:12.0px;letter-spacing:-0.220px;color:#1f5fcf;left:551px;text-decoration:underline">gov00078625</div>
<div class="t" style="top:623.34px;font-size:12.0px;letter-spacing:-0.220px;color:#3c3e6e;left:751px;">gov00078625</div>
<div class="t" style="top:623.34px;font-size:12.0px;letter-spacing:-0.465px;color:#3c3e6e;left:680.54px;width:300px;text-align:right;">($7,331.45)</div>
<div class="t" style="top:623.34px;font-size:12.0px;letter-spacing:-0.465px;color:#3c3e6e;left:805.54px;width:300px;text-align:right;">($7,331.45)</div>
<div class="t" style="top:623.34px;font-size:12.0px;letter-spacing:-0.209px;color:#3c3e6e;left:1012.79px;width:300px;text-align:right;">Stop Payment</div>
<div class="t" style="top:623.34px;font-size:12.0px;letter-spacing:-0.256px;color:#3c3e6e;left:1361px;">No</div>
<div class="a" style="left:25px;top:494px;width:16px;height:2px;background:linear-gradient(#3a3a72 50%,#9c9cbc 50%)"></div>
<div class="a" style="left:25px;top:524px;width:16px;height:2px;background:linear-gradient(#3a3a72 50%,#9c9cbc 50%)"></div>
<div class="a" style="left:25px;top:554px;width:16px;height:2px;background:linear-gradient(#3a3a72 50%,#9c9cbc 50%)"></div>
<div class="a" style="left:25px;top:584px;width:16px;height:2px;background:linear-gradient(#3a3a72 50%,#9c9cbc 50%)"></div>
<div class="a" style="left:25px;top:614px;width:16px;height:2px;background:linear-gradient(#3a3a72 50%,#9c9cbc 50%)"></div>
<div class="a" style="left:25px;top:784px;width:16px;height:2px;background:linear-gradient(#3a3a72 50%,#9c9cbc 50%)"></div>
<svg style="left:0;top:0" width="1" height="1"><path d="M31 498.5 L35.5 502.8 L31 507 Z" fill="#1a1a55"/></svg>
<div class="t" style="top:791.84px;font-size:12.0px;letter-spacing:0.046px;font-weight:bold;color:#1c1c50;left:681.05px;width:300px;text-align:right;">($7,331.45)</div>
<div class="t" style="top:791.84px;font-size:12.0px;letter-spacing:0.046px;font-weight:bold;color:#1c1c50;left:806.05px;width:300px;text-align:right;">($7,331.45)</div>
<div class="t" style="top:791.84px;font-size:12.0px;letter-spacing:0.049px;font-weight:bold;color:#1c1c50;left:932.05px;width:300px;text-align:right;">$1,769.58</div>
<div class="a" style="left:1485px;top:469px;width:17px;height:339px;background:#f0f0f0"></div>
<div class="a" style="left:23px;top:808px;width:1462px;height:17px;background:#f0f0f0"></div>
<div class="a" style="left:40px;top:808px;width:1061px;height:17px;background:#c8c8c8"></div>
<svg style="left:0;top:0;pointer-events:none" width="1512" height="830" viewBox="0 0 1512 830"><path d="M5.2 6.5 L7.5 2 L9.8 6.5 Z" fill="#3aa63a"/><rect x="11.5" y="2.2" width="4.8" height="4.6" fill="#2f8f3a"/><rect x="6" y="6.2" width="5.2" height="6.8" fill="#f4f4f4"/><rect x="7" y="7.5" width="3.2" height="4.3" fill="#3a7a3a"/><circle cx="10.3" cy="9.3" r="3" fill="none" stroke="#6a6a6a" stroke-width="0.9"/><path d="M12.5 11.8 L15.5 14.6" stroke="#b8935e" stroke-width="1.3" stroke-linecap="round"/><path d="M147.7 9.6 A5 5 0 1 1 142.9 5.8" fill="none" stroke="#0a0a0a" stroke-width="1.4"/><path d="M142.6 3.2 L147.2 6 L142.6 8.6 Z" fill="#000"/><path d="M157.4 5.6 L164.6 13 M164.6 5.6 L157.4 13" stroke="#c6e0f7" stroke-width="1.3"/><rect x="176" y="1.7" width="9.6" height="8" rx="1.2" fill="#eef3f8" stroke="#3a3a3a" stroke-width="1.3"/><path d="M177.5 3.6 H183.5" stroke="#8fb8d8" stroke-width="1"/><rect x="179.6" y="3.9" width="11" height="9.5" rx="1" fill="#3f78b0" stroke="#24405e" stroke-width="1.1"/><path d="M180.6 6.3 H189.8 M180.6 8.8 H189.8 M180.6 11.2 H189.8" stroke="#9cc6ea" stroke-width="0.9" stroke-dasharray="1.4 0.8"/><ellipse cx="181.7" cy="12.5" rx="4.7" ry="4.3" fill="#151515"/><ellipse cx="181.7" cy="11.1" rx="3.4" ry="2.7" fill="#f4d658"/><path d="M178.6 14.6 Q181.7 16 184.8 14.6" stroke="#9a9a9a" stroke-width="0.8" fill="none"/><ellipse cx="181.9" cy="10.5" rx="1.4" ry="0.8" fill="#c8842a"/><path d="M1509.8 10.2 L1515.2 10.2 L1512.5 13.2 Z" fill="#555"/><circle cx="103.2" cy="49.8" r="5.1" fill="#fff" stroke="#1a1a1a" stroke-width="1.8"/><path d="M107 53.6 L112.2 58.9" stroke="#1a1a1a" stroke-width="2" stroke-linecap="round"/><path d="M121.2 44.2 H131.8 Q134 44.2 134 46.4 V57.5 H121.2 Z" fill="#161a50"/><rect x="121" y="44" width="12" height="16" rx="1.2" fill="#2e3b9c"/><rect x="122.3" y="47.2" width="9" height="2.6" fill="#f4f4f4"/><path d="M126.5 48.5 H131" stroke="#9a9a9a" stroke-width="0.9"/><path d="M122.4 51.6 H123.4 M124.4 51.6 H127 M127.6 51.6 H128.2" stroke="#c8d0f8" stroke-width="1"/><path d="M122.4 54.4 H123.4 M124.4 54.4 H127 M127.6 54.4 H128.2" stroke="#c8d0f8" stroke-width="1"/><path d="M122.4 57.2 H123.4 M124.4 57.2 H127 M127.6 57.2 H128.2" stroke="#c8d0f8" stroke-width="1"/><rect x="128.3" y="53.2" width="2.8" height="3.4" fill="#c41a1a"/><rect x="131.2" y="55.4" width="5.6" height="4.8" fill="#ffffff"/><path d="M131.8 57.3 Q134 55.8 136.6 56.2 M131.6 59.7 H133" stroke="#4ec04e" stroke-width="0.9" fill="none"/><circle cx="153" cy="52.3" r="6" fill="#d6ecf8"/><path d="M147.2 51.3 A6 6 0 0 1 155.6 46.6" fill="none" stroke="#1f64a8" stroke-width="2.3"/><path d="M157.4 43.8 L157.9 49.9 L152.6 49.7 Z" fill="#1f64a8"/><path d="M158.6 53 A6 6 0 0 1 150.4 57.8" fill="none" stroke="#1f64a8" stroke-width="2.3"/><path d="M147.2 54.3 L152.5 54.6 L147.8 60.4 Z" fill="#1f64a8"/><rect x="93" y="80.8" width="15.6" height="15.3" fill="#231f20"/><rect x="93.5" y="81.2" width="14.6" height="4" fill="#3b3b3b"/><path d="M95.5 83.2 H97.6 M99.8 83.2 H101 M103.3 83.2 H104.5" stroke="#bbb" stroke-width="0.9"/><path d="M98 90.6 L100.9 87 L103.8 90.6" fill="none" stroke="#fff" stroke-width="1.6"/><path d="M100.9 87.6 V95.3" stroke="#fff" stroke-width="2"/><path d="M877 131.4 L880 134.4 L883 131.4" fill="none" stroke="#555" stroke-width="1.3"/><path d="M1181.5 125.4 L1184.5 128.4 L1187.5 125.4" fill="none" stroke="#555" stroke-width="1.3"/><rect x="1279.5" y="121.5" width="17" height="9" fill="#dcdcdc" stroke="#a0a0a0" stroke-width="1"/><rect x="1279.5" y="131.5" width="17" height="9" fill="#dcdcdc" stroke="#a0a0a0" stroke-width="1"/><path d="M1285 128.3 L1288 125.2 L1291 128.3" fill="none" stroke="#000" stroke-width="1.5"/><path d="M1285 133.6 L1288 136.7 L1291 133.6" fill="none" stroke="#000" stroke-width="1.5"/><rect x="1296.5" y="121.5" width="18.3" height="19.5" fill="#dcdcdc" stroke="#a0a0a0" stroke-width="1.2"/><path d="M1302 129.4 L1305.3 132.6 L1308.6 129.4" fill="none" stroke="#000" stroke-width="1.6"/><path d="M25.6 424.6 L29.3 428.4 L33.6 421.4" fill="none" stroke="#222" stroke-width="1.9"/><circle cx="229" cy="449" r="3" fill="#222"/><path d="M1484.2 202.6 L1487.6 198.8 L1491 202.6" fill="none" stroke="#a0a0a0" stroke-width="1.2"/><path d="M1484.2 390.4 L1487.6 394.2 L1491 390.4" fill="none" stroke="#a0a0a0" stroke-width="1.2"/><path d="M1490.2 477.6 L1493.6 473.8 L1497 477.6" fill="none" stroke="#d4d4d4" stroke-width="1.1"/><path d="M1490.2 798.4 L1493.6 802.2 L1497 798.4" fill="none" stroke="#d4d4d4" stroke-width="1.1"/><path d="M33.4 813.4 L30.4 816.6 L33.4 819.8" fill="none" stroke="#a8a8a8" stroke-width="1.3"/><path d="M1474.6 813.4 L1477.6 816.6 L1474.6 819.8" fill="none" stroke="#a8a8a8" stroke-width="1.5"/><rect x="44.3" y="474.2" width="1.6" height="1.6" fill="#888"/><rect x="44.3" y="480.2" width="1.6" height="1.6" fill="#888"/><rect x="44.3" y="486.2" width="1.6" height="1.6" fill="#888"/></svg>
<div class="a" style="left:50px;top:613px;width:1435px;height:43px;border:3px solid #fa3b3b;box-shadow:2px 4px 6px rgba(0,0,0,0.28), inset 0 5px 5px rgba(0,0,0,0.2), inset -3px 0 4px rgba(0,0,0,0.08)"></div>
</body></html>
